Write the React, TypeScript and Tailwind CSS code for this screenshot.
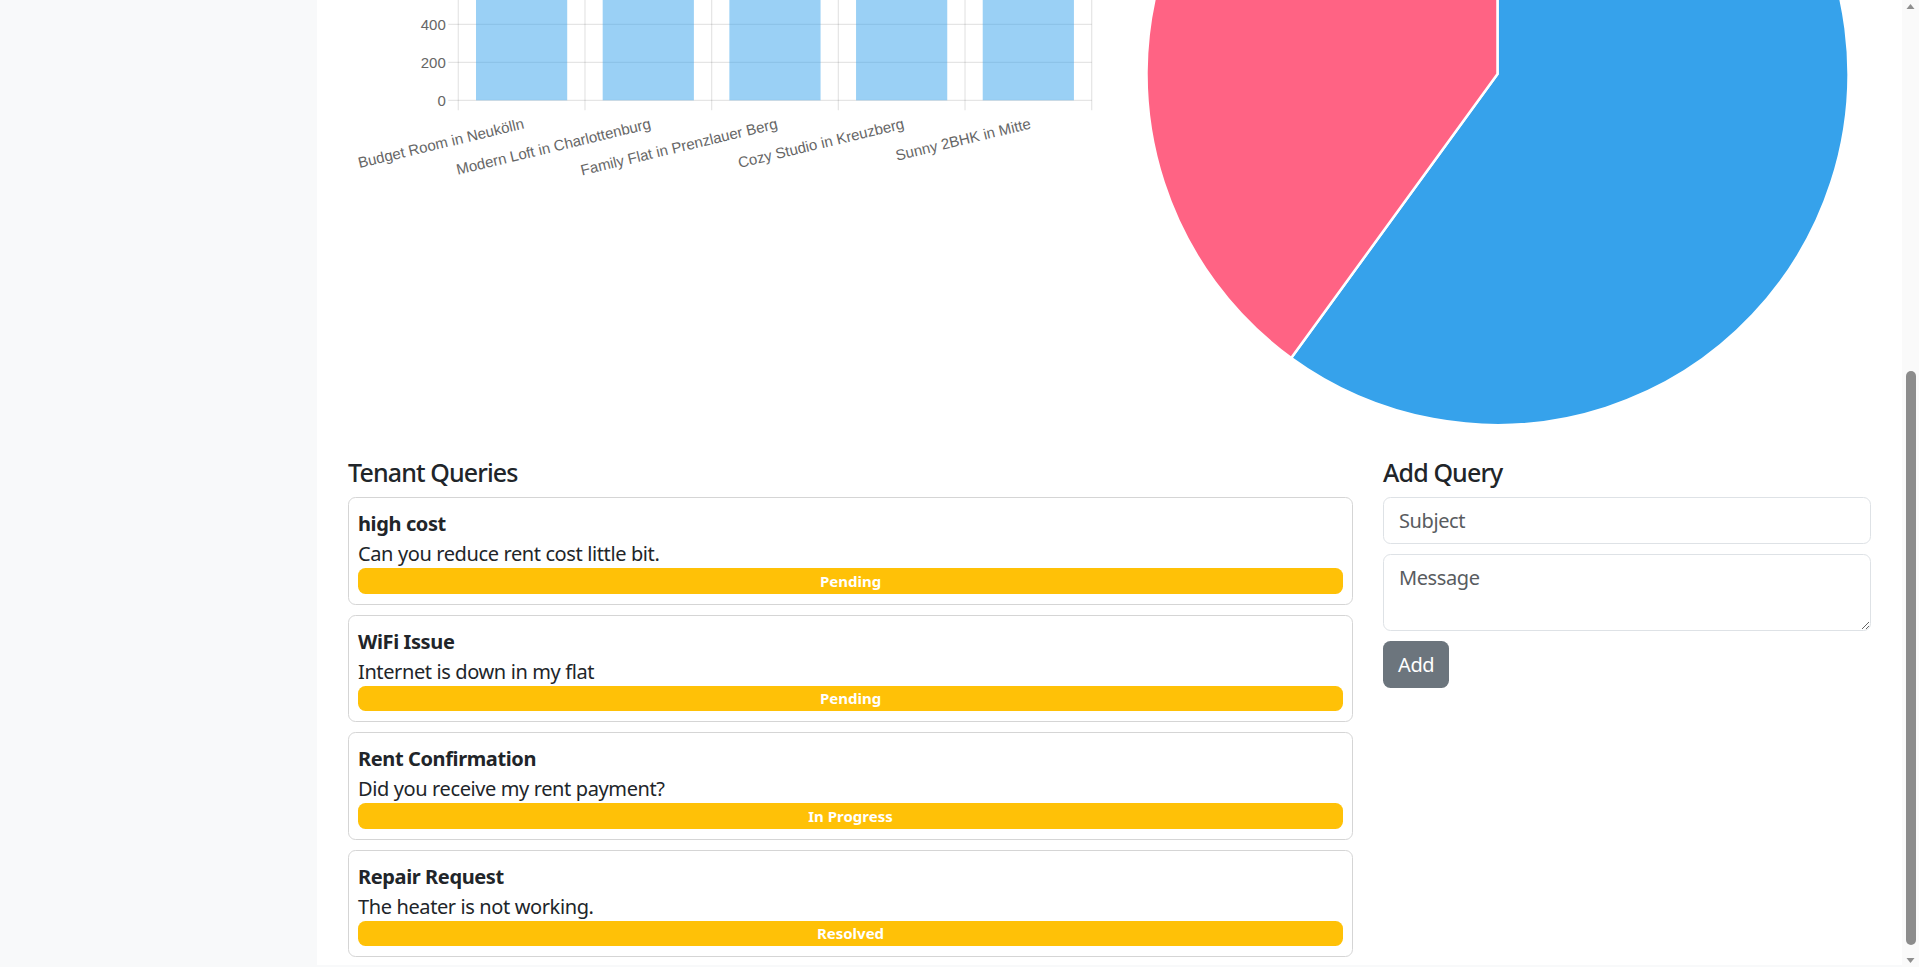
// Tenant dashboard – view scrolled to the bottom of the page

/** A tenant query. */
interface Query {
  subject: string
  message: string
  status: string
}

const queries: Query[] = [
  { subject: "high cost", message: "Can you reduce rent cost little bit.", status: "Pending" },
  { subject: "WiFi Issue", message: "Internet is down in my flat", status: "Pending" },
  { subject: "Rent Confirmation", message: "Did you receive my rent payment?", status: "In Progress" },
  { subject: "Repair Request", message: "The heater is not working.", status: "Resolved" },
]

const properties = [
  "Budget Room in Neukölln",
  "Modern Loft in Charlottenburg",
  "Family Flat in Prenzlauer Berg",
  "Cozy Studio in Kreuzberg",
  "Sunny 2BHK in Mitte",
]

export default function App() {
  return (
    <div className="flex h-[967px] overflow-hidden bg-[#f8f9fa] font-['Noto_Sans','Segoe_UI',sans-serif] text-[#212529]">
      {/* Sidebar (its content is scrolled out of view) */}
      <aside className="w-[317px] shrink-0 bg-[#f8f9fa]" />

      {/* Main content */}
      <main className="h-[965px] flex-1 overflow-hidden bg-white px-[31px]">
        {/* Charts */}
        <div className="grid h-[447px] grid-cols-2 gap-[30px]">
          <BarChart />
          <PieChart />
        </div>

        {/* Queries */}
        <div className="mt-[10px] grid grid-cols-[1005fr_488fr] gap-[30px]">
          <section>
            <h5 className="mb-[10px] text-[25px] leading-[30px] font-medium tracking-[-0.035em]">Tenant Queries</h5>
            <div className="flex flex-col gap-[10px]">
              {queries.map((q) => (
                <QueryCard key={q.subject} query={q} />
              ))}
            </div>
          </section>

          <section>
            <h5 className="mb-[10px] text-[25px] leading-[30px] font-medium tracking-[-0.035em]">Add Query</h5>
            <input
              placeholder="Subject"
              className="mb-[10px] block h-[47px] w-full rounded-[7.5px] border border-[#dee2e6] px-[15px] text-[20px] leading-[30px] tracking-[-0.02em] outline-none placeholder:text-[#595c5f]"
            />
            <textarea
              placeholder="Message"
              rows={2}
              className="mb-[10px] block h-[77px] w-full rounded-[7.5px] border border-[#dee2e6] px-[15px] py-[8px] text-[20px] leading-[30px] tracking-[-0.02em] outline-none placeholder:text-[#595c5f]"
            />
            <button className="h-[47px] rounded-[7.5px] bg-[#6c757d] px-[15px] text-[20px] tracking-[-0.02em] text-white">Add</button>
          </section>
        </div>
      </main>

      <Scrollbar />
    </div>
  )
}

/** One query card with its status bar. */
function QueryCard({ query }: { query: Query }) {
  return (
    <div className="rounded-[7.5px] border border-[#d5d5d5] px-[9px] pt-[11px] pb-[10px] tracking-[-0.024em]">
      <div className="text-[20px] leading-[30px] font-bold">{query.subject}</div>
      <div className="text-[20px] leading-[29px]">{query.message}</div>
      <div className="flex h-[25.5px] items-center justify-center rounded-[7.5px] bg-[#ffc107] text-[15px] font-bold tracking-normal text-white">
        {query.status}
      </div>
    </div>
  )
}

/** Bar chart of the rents, only its lower part is in view. */
function BarChart() {
  const left = 110.3
  const step = 126.68
  const axisY = 100.3
  const grid = [
    { y: 24.3, label: "400" },
    { y: 62.3, label: "200" },
    { y: 100.3, label: "0" },
  ]

  return (
    <svg width="100%" height="200" className="block font-['Liberation_Sans',Arial,sans-serif]">
      {/* horizontal grid */}
      {grid.map((g) => (
        <line key={g.label} x1={left - 10} x2={left + step * 5} y1={g.y} y2={g.y} stroke="rgba(0,0,0,0.1)" strokeWidth="1.25" />
      ))}
      {/* vertical grid */}
      {[0, 1, 2, 3, 4, 5].map((k) => (
        <line key={k} x1={left + k * step} x2={left + k * step} y1={-20} y2={axisY + 10} stroke="rgba(0,0,0,0.1)" strokeWidth="1.25" />
      ))}
      {/* bars */}
      {properties.map((p, k) => (
        <rect key={p} x={left + k * step + 17.7} y={-20} width={91.2} height={axisY + 20} fill="rgba(54,162,235,0.5)" />
      ))}
      {/* y labels */}
      {grid.map((g) => (
        <text key={g.label} x={left - 12.5} y={g.y} textAnchor="end" dominantBaseline="central" fontSize="15" fill="#666">
          {g.label}
        </text>
      ))}
      {/* x labels */}
      {properties.map((p, k) => (
        <text
          key={p}
          transform={`translate(${left + k * step + step / 2 + 2} 123) rotate(-13.5)`}
          textAnchor="end"
          dominantBaseline="central"
          fontSize="15"
          fill="#666"
        >
          {p}
        </text>
      ))}
    </svg>
  )
}

/** Pie chart, its top is scrolled out of view. */
function PieChart() {
  const cx = 372.5
  const cy = 74
  const r = 351
  const a = (216 * Math.PI) / 180
  const px = cx + r * Math.sin(a)
  const py = cy - r * Math.cos(a)

  return (
    <svg width="100%" height="447" className="block">
      <path d={`M${cx} ${cy} L${cx} ${cy - r} A${r} ${r} 0 1 1 ${px} ${py} Z`} fill="#36a2eb" stroke="#fff" strokeWidth="2.5" strokeLinejoin="round" />
      <path d={`M${cx} ${cy} L${px} ${py} A${r} ${r} 0 0 1 ${cx} ${cy - r} Z`} fill="#ff6384" stroke="#fff" strokeWidth="2.5" strokeLinejoin="round" />
    </svg>
  )
}

/** Browser scrollbar, scrolled to the bottom. */
function Scrollbar() {
  return (
    <div className="flex w-[17px] shrink-0 flex-col items-center bg-[#fafafa]">
      <svg width="17" height="14" className="block">
        <path d="M4.5 9 L8.5 4 L12.5 9 Z" fill="#8f8f8f" />
      </svg>
      <div className="h-[357px]" />
      <div className="h-[574px] w-[10px] rounded-full bg-[#8c8c8c]" />
      <div className="flex-1" />
      <svg width="17" height="14" className="block">
        <path d="M4.5 5 L8.5 10 L12.5 5 Z" fill="#8f8f8f" />
      </svg>
    </div>
  )
}
